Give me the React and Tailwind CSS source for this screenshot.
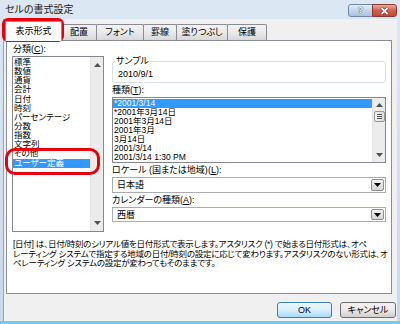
import React from 'react'

const JP = "font-['Liberation_Sans','Noto_Sans_CJK_JP',sans-serif] [font-feature-settings:'palt']"

const tabs = [
  { label: '表示形式', w: 'w-[57px]', active: true },
  { label: '配置', w: 'w-[36px]' },
  { label: 'フォント', w: 'w-[48px]' },
  { label: '罫線', w: 'w-[34px]' },
  { label: '塗りつぶし', w: 'w-[52px]' },
  { label: '保護', w: 'w-[40px]' },
]

const categories = ['標準', '数値', '通貨', '会計', '日付', '時刻', 'パーセンテージ', '分数', '指数', '文字列', 'その他', 'ユーザー定義']
const types = ['*2001/3/14', '*2001年3月14日', '2001年3月14日', '2001年3月', '3月14日', '2001/3/14', '2001/3/14 1:30 PM']

function Up() {
  return <svg width="7" height="4" viewBox="0 0 7 4"><path d="M0 4 L3.5 0 L7 4 Z" fill="#505050" /></svg>
}
function Down() {
  return <svg width="7" height="4" viewBox="0 0 7 4"><path d="M0 0 L7 0 L3.5 4 Z" fill="#505050" /></svg>
}

function Accel({ k }) {
  return <>(<span className="underline">{k}</span>):</>
}

function Select({ value, h }) {
  return (
    <div className={`flex ${h} border border-[#abadb3] bg-white`}>
      <div className="flex-1 pl-[4px] flex items-center text-[9px] leading-[10px]">{value}</div>
      <div className="w-[13px] my-[1px] mr-[1px] border border-[#8e8f8f] rounded-[2px] bg-gradient-to-b from-[#f2f2f2] to-[#d5d5d5] flex items-center justify-center">
        <svg width="7" height="4" viewBox="0 0 7 4"><path d="M0 0 L7 0 L3.5 4 Z" fill="#000" /></svg>
      </div>
    </div>
  )
}

export default function App() {
  return (
    <div className={`relative w-[400px] h-[324px] flex flex-col bg-gradient-to-b from-[#dce7f4] to-[#c9d8ea] text-black overflow-hidden ${JP}`}>
      {/* タイトルバー */}
      <div className="h-[19px] flex items-start shrink-0">
        <div className="pl-[5px] h-[19px] flex items-center text-[10px] text-[#1a1a1a]">セルの書式設定</div>
        <div className="ml-auto mt-[4px] mr-[3px] flex">
          <div className="w-[25px] h-[13px] rounded-l-[3px] border border-[#6f86a8] bg-gradient-to-b from-[#e4edf8] via-[#c3d5ec] to-[#aac2e2] flex items-center justify-center text-[9px] leading-none font-bold text-white [text-shadow:0_0_1px_#2a3d5c,0_0_1px_#2a3d5c]">?</div>
          <div className="w-[25px] h-[13px] -ml-px rounded-r-[3px] border border-[#8a3b33] bg-gradient-to-b from-[#e9a99c] via-[#d2604f] to-[#c3473a] flex items-center justify-center">
            <svg width="9" height="8" viewBox="0 0 9 8">
              <path d="M1.5 1 L7.5 7 M7.5 1 L1.5 7" stroke="#5a1a14" strokeWidth="3" />
              <path d="M1.5 1 L7.5 7 M7.5 1 L1.5 7" stroke="#fff" strokeWidth="1.8" />
            </svg>
          </div>
        </div>
      </div>

      {/* 本体 */}
      <div className="flex-1 ml-[3px] mr-[3px] border-l border-[#9aa3ad] bg-[#f0f0f0] flex flex-col">
        <div className="mt-[2px] h-[19px] pl-[1px] flex items-end">
          {tabs.map((t) =>
            t.active ? (
              <div key={t.label} className={`relative z-10 ${t.w} h-[20px] -mb-px bg-white border border-b-0 border-[#898c95] rounded-t-[2px] flex items-center justify-center text-[9px]`}>
                {t.label}
              </div>
            ) : (
              <div key={t.label} className={`${t.w} h-[16px] -ml-px border border-b-0 border-[#898c95] rounded-t-[2px] bg-gradient-to-b from-[#f3f3f3] via-[#e9e9e9] to-[#d8d8d8] flex items-center justify-center text-[9px]`}>
                {t.label}
              </div>
            )
          )}
        </div>

        <div className="ml-[2px] mr-[5px] h-[254px] border border-[#898c95] bg-white flex flex-col">
          <div className="flex pl-[5px] pt-[2px]">
            {/* 分類 */}
            <div className="w-[92px] flex flex-col">
              <div className="h-[13px] leading-[13px] pl-[1px] text-[9px]">分類<Accel k="C" /></div>
              <div className="h-[176px] border border-[#828790] flex">
                <div className="flex-1 pt-[1px]">
                  {categories.map((c, i) => (
                    <div key={c} className={`h-[9.15px] leading-[9.15px] pl-[1px] text-[8.5px] whitespace-nowrap ${i === categories.length - 1 ? 'bg-[#3399ff] text-white' : ''}`}>{c}</div>
                  ))}
                </div>
                <div className="w-[13px] bg-[#ececec] border-l border-[#e4e4e4] flex flex-col items-center justify-between py-[6px]">
                  <Up />
                  <Down />
                </div>
              </div>
            </div>

            {/* 右側 */}
            <div className="ml-[8px] w-[274px] flex flex-col">
              <div className="mt-[18px] relative h-[22px] border border-[#d5dfe5] rounded-[3px] pl-[5px] pt-[7px] text-[9px] leading-[10px]">
                <span className="absolute left-[2px] top-[-6px] bg-white px-[1px] leading-[10px]">サンプル</span>
                2010/9/1
              </div>
              <div className="h-[13px] leading-[13px] mt-[1px] text-[9px]">種類<Accel k="T" /></div>
              <div className="h-[66px] border border-[#828790] flex">
                <div className="flex-1 pt-[1px]">
                  {types.map((t, i) => (
                    <div key={t} className={`h-[9px] leading-[9px] pl-[1px] text-[8.5px] whitespace-nowrap ${i === 0 ? 'bg-[#3399ff] text-white' : ''}`}>{t}</div>
                  ))}
                </div>
                <div className="w-[13px] bg-[#ececec] border-l border-[#e4e4e4] flex flex-col items-center py-[5px]">
                  <Up />
                  <div className="mt-[4px] w-[11px] h-[11px] border border-[#959595] rounded-[2px] bg-gradient-to-r from-[#f3f3f3] to-[#dcdcdc] flex flex-col items-center justify-center gap-[1px]">
                    <div className="w-[5px] h-px bg-[#555]" />
                    <div className="w-[5px] h-px bg-[#555]" />
                    <div className="w-[5px] h-px bg-[#555]" />
                  </div>
                  <div className="mt-auto"><Down /></div>
                </div>
              </div>
              <div className="h-[14px] leading-[14px] text-[9px]">ロケール (国または地域)<Accel k="L" /></div>
              <Select value="日本語" h="h-[16px]" />
              <div className="h-[14px] leading-[14px] text-[9px]">カレンダーの種類<Accel k="A" /></div>
              <Select value="西暦" h="h-[15px]" />
            </div>
          </div>

          <div className="mt-[8px] pl-[6px] text-[8.5px] leading-[9.5px] tracking-[-0.03em] whitespace-nowrap">
            <div>[日付] は、日付/時刻のシリアル値を日付形式で表示します。アスタリスク (*) で始まる日付形式は、オペ</div>
            <div>レーティング システムで指定する地域の日付/時刻の設定に応じて変わります。アスタリスクのない形式は、オ</div>
            <div>ペレーティング システムの設定が変わってもそのままです。</div>
          </div>
        </div>

        <div className="mt-[8px] pr-[1px] flex justify-end gap-[8px]">
          <button className="w-[55px] h-[16px] rounded-[3px] border border-[#3c7fb1] bg-gradient-to-b from-[#eaf6fd] via-[#d9f0fc] to-[#a7d9f5] text-[9px] leading-none">OK</button>
          <button className="w-[56px] h-[16px] rounded-[3px] border border-[#707070] bg-gradient-to-b from-[#f2f2f2] via-[#ebebeb] to-[#cfcfcf] text-[9px] leading-none">キャンセル</button>
        </div>
      </div>
      <div className="h-[3px] bg-[#6ccbee] shrink-0" />

      {/* 注目枠 */}
      <div className="absolute left-[2px] top-[18px] w-[62px] h-[24px] border-[3px] border-[#e8000b] rounded-[6px] pointer-events-none" />
      <div className="absolute left-[5px] top-[148px] w-[95px] h-[27px] border-[3px] border-[#e8000b] rounded-[10px] pointer-events-none" />
    </div>
  )
}
